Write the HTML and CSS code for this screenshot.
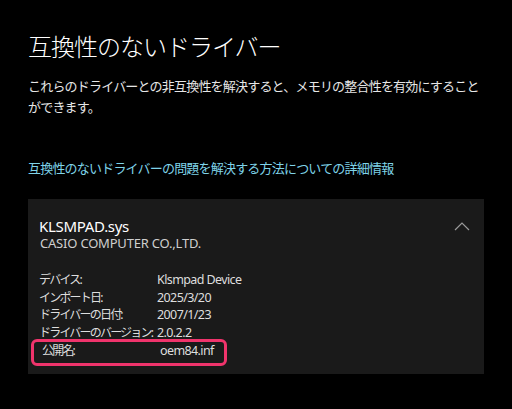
FILE: index.html
```html
<!DOCTYPE html>
<html lang="ja">
<head>
  <meta charset="UTF-8" />
  <title>互換性のないドライバー</title>
  <link rel="stylesheet" href="styles.css">
</head>
<body>
  <h1>互換性のないドライバー</h1>
  <p class="intro">これらのドライバーとの非互換性を解決すると、メモリの整合性を有効にすることができます。</p>
  <a class="help" href="#">互換性のないドライバーの問題を解決する方法についての詳細情報</a>

  <div class="card">
    <div class="card-head">
      <div>
        <div class="file">KLSMPAD.sys</div>
        <div class="vendor">CASIO COMPUTER CO.,LTD.</div>
      </div>
      <svg class="chevron" width="16" height="9" viewBox="0 0 16 9">
        <path d="M1 8 L8 1 L15 8" fill="none" stroke="#9a9a9a" stroke-width="1.2" />
      </svg>
    </div>
    <div class="details">
      <div class="row"><span class="key">デバイス:</span><span class="val">Klsmpad Device</span></div>
      <div class="row"><span class="key">インポート日:</span><span class="val">2025/3/20</span></div>
      <div class="row"><span class="key">ドライバーの日付:</span><span class="val">2007/1/23</span></div>
      <div class="row"><span class="key">ドライバーのバージョン:</span><span class="val">2.0.2.2</span></div>
      <div class="row mark"><span class="key">公開名:</span><span class="val">oem84.inf</span></div>
    </div>
  </div>
</body>
</html>
```

FILE: styles.css
```css
body {
  margin: 0;
  padding: 30px 28px 0 28px;
  background: #000;
  color: #fff;
  font-family: "Noto Sans", "Noto Sans CJK JP", sans-serif;
  width: 456px;
}
h1 {
  margin: 0;
  font-size: 24px;
  font-weight: 300;
  letter-spacing: -1px;
  line-height: 34px;
}
.intro {
  margin: 12px 0 0 0;
  font-size: 13px;
  line-height: 21px;
  letter-spacing: -0.8px;
  color: #e6e6e6;
}
.help {
  display: block;
  margin-top: 40px;
  font-size: 13px;
  line-height: 20px;
  letter-spacing: -0.8px;
  color: #7fd3e8;
  text-decoration: none;
}
.card {
  margin-top: 21px;
  background: #1a1a1a;
  padding: 18px 12px 8px 11px;
}
.card-head {
  display: flex;
  justify-content: space-between;
  align-items: flex-start;
}
.file {
  font-size: 15px;
  line-height: 18px;
  letter-spacing: -0.3px;
}
.vendor {
  font-size: 13px;
  line-height: 16px;
  color: #cfcfcf;
  margin-left: 1px;
  letter-spacing: -0.2px;
}
.chevron {
  margin-top: 5px;
  margin-right: 2px;
}
.details {
  margin-top: 20px;
  font-size: 12.5px;
  color: #dedede;
}
.row {
  display: flex;
  line-height: 17.7px;
  letter-spacing: -0.6px;
}
.key {
  width: 118px;
  flex: none;
  white-space: nowrap;
  font-size: 12px;
  letter-spacing: -1.8px;
}
.row.mark {
  width: 182px;
  margin-left: -8px;
  margin-top: -3px;
  padding: 0 0 3px 8px;
  border: 3px solid #f0346c;
  border-radius: 6px;
}
```
